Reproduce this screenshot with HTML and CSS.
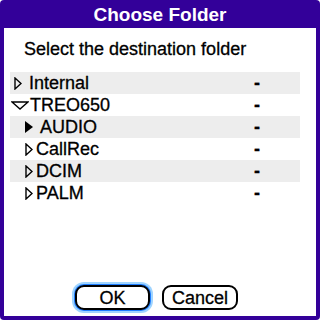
FILE: index.html
```html
<!DOCTYPE html>
<html lang="en">
<head>
    <meta charset="UTF-8">
    <title>Choose Folder</title>
    <link rel="stylesheet" href="styles.css">
</head>
<body>
    <div class="dialog">
        <div class="title">Choose Folder</div>
        <div class="content">
            <div class="prompt">Select the destination folder</div>
            <div class="tree">
                <div class="row">
                    <svg class="arrow" width="8" height="13" viewBox="0 0 8 13"><path d="M1 1 L7 6.5 L1 12 Z" fill="none" stroke="#000" stroke-width="1.4"/></svg>
                    <span class="name">Internal</span>
                    <span class="size">-</span>
                </div>
                <div class="row">
                    <svg class="arrow open" width="18" height="9" viewBox="0 0 18 9"><path d="M1 1 L17 1 L9 8 Z" fill="none" stroke="#000" stroke-width="1.4"/></svg>
                    <span class="name">TREO650</span>
                    <span class="size">-</span>
                </div>
                <div class="row child">
                    <svg class="arrow sel" width="10" height="14" viewBox="0 0 10 14"><path d="M1 1 L9 7 L1 13 Z" fill="#000"/></svg>
                    <span class="name">AUDIO</span>
                    <span class="size">-</span>
                </div>
                <div class="row child">
                    <svg class="arrow" width="8" height="13" viewBox="0 0 8 13"><path d="M1 1 L7 6.5 L1 12 Z" fill="none" stroke="#000" stroke-width="1.4"/></svg>
                    <span class="name">CallRec</span>
                    <span class="size">-</span>
                </div>
                <div class="row child">
                    <svg class="arrow" width="8" height="13" viewBox="0 0 8 13"><path d="M1 1 L7 6.5 L1 12 Z" fill="none" stroke="#000" stroke-width="1.4"/></svg>
                    <span class="name">DCIM</span>
                    <span class="size">-</span>
                </div>
                <div class="row child">
                    <svg class="arrow" width="8" height="13" viewBox="0 0 8 13"><path d="M1 1 L7 6.5 L1 12 Z" fill="none" stroke="#000" stroke-width="1.4"/></svg>
                    <span class="name">PALM</span>
                    <span class="size">-</span>
                </div>
            </div>
            <div class="buttons">
                <button class="btn focus">OK</button>
                <button class="btn">Cancel</button>
            </div>
        </div>
    </div>
</body>
</html>
```

FILE: styles.css
```css
body {
    margin: 0;
    padding: 0;
    background: #fff;
    font-family: "Liberation Sans", Arial, sans-serif;
    color: #000;
}

.dialog {
    width: 320px;
    height: 320px;
    box-sizing: border-box;
    background: #330099;
    border-radius: 4px;
    padding: 0 4px 4px 4px;
    display: flex;
    flex-direction: column;
}

.title {
    height: 28px;
    line-height: 29px;
    text-align: center;
    color: white;
    font-weight: bold;
    font-size: 19px;
}

.content {
    flex: 1;
    background: white;
    display: flex;
    flex-direction: column;
    -webkit-text-stroke: 0.3px #000;
}

.prompt {
    font-size: 18px;
    line-height: 22px;
    padding: 10px 0 0 20px;
    height: 34px;
}

.tree {
    margin-left: 6px;
    width: 290px;
}

.row {
    height: 22px;
    display: flex;
    align-items: center;
    font-size: 18px;
}

.row:nth-child(odd) {
    background: #ededed;
}

/* collapsed folder */
.arrow {
    margin-left: 4px;
    margin-right: 7px;
    flex: none;
}

/* expanded folder */
.arrow.open {
    margin-left: 1px;
    margin-right: 1px;
    align-self: flex-start;
    margin-top: 7px;
}

.child .arrow {
    margin-left: 15px;
    margin-right: 3px;
}

.child .arrow.sel {
    margin-left: 14px;
    margin-right: 6px;
}

.name {
    flex: 1;
}

.size {
    width: 46px;
    font-weight: bold;
}

.buttons {
    margin-top: auto;
    height: 25px;
    display: flex;
    gap: 12px;
    padding: 0 0 6px 71px;
}

.btn {
    font-family: "Liberation Sans", Arial, sans-serif;
    font-size: 18px;
    background: white;
    border: 2px solid #000;
    border-radius: 9px;
    height: 25px;
    padding: 0;
    line-height: 20px;
    color: #000;
    -webkit-text-stroke: 0.3px #000;
}

.btn.focus {
    width: 75px;
    box-shadow: 0 0 0 1px #1e7dff, 0 0 0 3px #9fd4ff;
}

.btn:not(.focus) {
    width: 76px;
}
```
